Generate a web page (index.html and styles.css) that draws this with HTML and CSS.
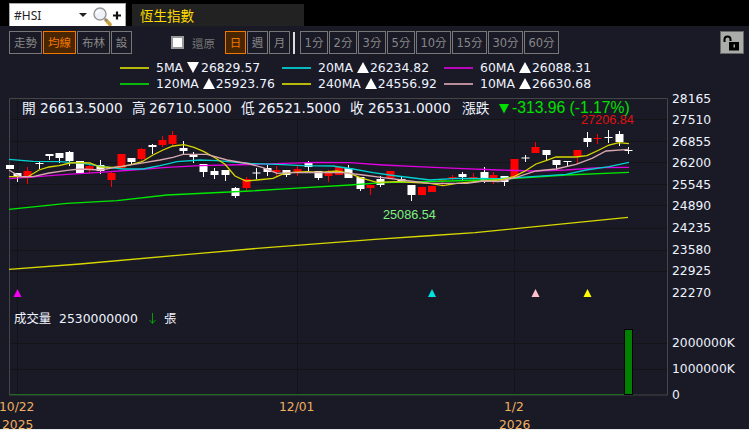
FILE: index.html
```html
<!DOCTYPE html>
<html lang="zh-Hant">
<head>
<meta charset="utf-8">
<title>#HSI</title>
<link rel="stylesheet" href="styles.css">
</head>
<body>
<div class="page">
  <header class="top">
    <div class="search">
      <span class="symbol">#HSI</span>
      <svg class="search-icons" width="45" height="21" viewBox="0 0 45 21">
        <path d="M2 8h8l-4 4z" fill="#222"/>
        <path d="M29 15l4 4.500" stroke="#c8a040" stroke-width="3.500" stroke-linecap="round"/>
        <path d="M28 14l2 2" stroke="#888" stroke-width="2"/>
        <circle cx="23" cy="9" r="6" fill="#eef2f8" stroke="#999" stroke-width="1.500"/>
        <path d="M19.500 9a3.500 3.500 0 0 1 3.500-3.500" fill="none" stroke="#fff" stroke-width="1.500"/>
        <path d="M36 10.500h8M40 6.500v8" stroke="#111" stroke-width="2.200"/>
      </svg>
    </div>
    <div class="title">恆生指數</div>
  </header>

  <nav class="toolbar">
    <div class="group g-main">
      <button class="btn w33">走勢</button><button class="btn w33 on">均線</button><button class="btn w33">布林</button><button class="btn w21">設</button>
    </div>
    <label class="restore"><span class="check"></span><span>還原</span></label>
    <div class="group g-period">
      <button class="btn w21 on">日</button><button class="btn w21">週</button><button class="btn w21">月</button>
    </div>
    <span class="sep"></span>
    <div class="group g-mins">
      <button class="btn w28">1分</button><button class="btn w28">2分</button><button class="btn w28">3分</button><button class="btn w28">5分</button><button class="btn w35">10分</button><button class="btn w35">15分</button><button class="btn w35">30分</button><button class="btn w35">60分</button>
    </div>
    <button class="lock" aria-label="鎖定">
      <svg width="20" height="16" viewBox="0 0 20 16">
        <path d="M2.500 7V4.500a3 3 0 0 1 6 0V6" fill="none" stroke="#000" stroke-width="2"/>
        <rect x="7" y="7" width="10" height="8.500" fill="#000"/>
        <rect x="11.500" y="9.500" width="1.500" height="3" fill="#aaa"/>
      </svg>
    </button>
  </nav>

  <section class="legend">
    <div class="ma"><svg class="swatch" width="29" height="2" viewBox="0 0 29 2"><path class="sw-5" d="M0 1H29"/></svg><span class="name">5MA</span><i class="tri down"></i><span>26829.57</span></div>
    <div class="ma"><svg class="swatch" width="29" height="2" viewBox="0 0 29 2"><path class="sw-20" d="M0 1H29"/></svg><span class="name">20MA</span><i class="tri"></i><span>26234.82</span></div>
    <div class="ma"><svg class="swatch" width="29" height="2" viewBox="0 0 29 2"><path class="sw-60" d="M0 1H29"/></svg><span class="name">60MA</span><i class="tri"></i><span>26088.31</span></div>
    <div class="ma"><svg class="swatch" width="29" height="2" viewBox="0 0 29 2"><path class="sw-120" d="M0 1H29"/></svg><span class="name">120MA</span><i class="tri"></i><span>25923.76</span></div>
    <div class="ma"><svg class="swatch" width="29" height="2" viewBox="0 0 29 2"><path class="sw-240" d="M0 1H29"/></svg><span class="name">240MA</span><i class="tri"></i><span>24556.92</span></div>
    <div class="ma"><svg class="swatch" width="29" height="2" viewBox="0 0 29 2"><path class="sw-10" d="M0 1H29"/></svg><span class="name">10MA</span><i class="tri"></i><span>26630.68</span></div>
  </section>

  <svg class="chart" width="749" height="334" viewBox="0 95 749 334">
    <path class="grid" d="M9 119.500H667M9 141.500H667M9 162.500H667M9 184.500H667M9 205.500H667M9 228.500H667M9 250.500H667M9 271.500H667M9 343.500H667M9 369.500H667M17.500 99V395M297.500 99V395M514.500 99V395"/>
    <path class="frame" d="M9.500 395V98.500H667.500V395H9"/>
    <path class="volbase" d="M10 394.500H624"/>

    <path class="wick-w" d="M17.500 173V182M39.500 161V169M49.500 154V160M59.500 153V163M69.500 151V166M100.500 160V174M131.500 158V165M152.500 144V154M183.500 141V154M193.500 152V163M203.500 164V177M214.500 168V179M225.500 170V181M235.500 187V198M256.500 168V179M267.500 165V176M286.500 170V177M308.500 161V171M318.500 171V180M348.500 165V178M360.500 177V191M380.500 176V187M401.500 176V183M411.500 185V201M462.500 172V180M484.500 167V183M504.500 176V186M525.500 155V162M546.500 150V160M556.500 160V171M567.500 161V166M587.500 132V147M608.500 130V143M619.500 131V146M628.500 147V154"/>
    <path class="body-w" d="M10 165V169M17.500 173V177M39.500 163V164M49.500 154V156M59.500 153V158M69.500 152V161M80 161V173M100.500 165V171M131.500 158V162M152.500 145V147M183.500 148V151M193.500 154V157M203.500 164V172M214.500 171V175M225.500 170V175M235.500 188V196M256.500 172.500V173.500M267.500 168V172M286.500 170V175M308.500 163V167M318.500 171V178M348.500 168V178M360.500 177V189M380.500 179V185M401.500 179V182M411.500 185V195M462.500 174V177M484.500 172V181M504.500 176V182M525.500 157.500V158.500M546.500 150V155M556.500 160V165M567.500 161V162M587.500 138V142M608.500 137V138M619.500 134V142M628.500 150V151"/>
    <path class="wick-r" d="M27.500 167V184M89.500 164V173M111.500 171V187M141.500 148V161M162.500 136V147M172.500 131V146M246.500 177V192M276.500 166V177M297.500 166V176M328.500 170V182M370.500 185V195M442.500 179V186M452.500 175V181M473.500 173V181M493.500 172V184M535.500 142V153M577.500 150V163M597.500 134V144"/>
    <path class="body-r" d="M27.500 171V178M89.500 166V170M111.500 173V180M121.500 154V168M141.500 149V159M162.500 140V145M172.500 135V144M246.500 179V188M276.500 170V172M297.500 169V173M328.500 172V176M339 167V175M370.500 185V188M390.500 171V178M422 187V195M432 186V192M442.500 180V181M452.500 177V178M473.500 177V178M493.500 175V182M514.500 159V177M535.500 147V153M577.500 150V156M597.500 138V139"/>

    <polyline class="line l-60" points="9,178.700 37,176.700 67,174.300 100,172.300 133,170 167,167.300 200,165.700 250,164.500 283,163.300 317,162.300 350,162.700 383,165 417,166.700 457,168.300 499,170 532,171 566,170 599,167.700 629,167.300"/>
    <polyline class="line l-120" points="9,209.300 67,203.300 117,200.700 167,195 250,191 293,188.300 350,185 383,182.700 450,181 499,179.500 566,175 629,172.300"/>
    <polyline class="line l-240" points="9,269.300 80,264 200,253.300 270,247.300 375,239.300 425,236 475,232.700 628,217.300"/>
    <polyline class="line l-20" points="9,159.300 33,161.300 60,161.700 83,163.300 103,166.700 123,169 143,169 160,165.700 177,161.700 200,160 217,160.700 250,163.500 277,164.300 303,165.700 333,166 353,169 373,172.700 397,176 430,180 457,178.300 499,178.600 532,176.700 566,174.300 586,170 609,166.700 629,162.300"/>
    <polyline class="line l-5" points="9,176.700 28,176.700 39,170 49,167 59,165.700 70,163 80,162.700 90,163 100,167 111,167.300 122,166.700 132,164.300 142,161.700 153,155 163,150 173,146 184,144.700 194,147.300 204,151.700 215,157.700 225,164.300 235,176 246,181 257,180 273,178.300 283,174 293,172.300 307,171.700 320,172.300 337,171 350,173.300 360,177.700 377,182.300 397,181.700 430,183.300 443,185.700 457,183.300 483,181 499,180 514,176.700 524,171.700 536,164 546,160.700 556,157 576,157 587,155.700 599,150 609,145 619,142.700 629,143.700"/>
    <polyline class="line l-10" points="9,170 20,176.700 33,176.700 49,173 67,170.300 80,169 100,170 120,166.700 140,163.300 160,160 173,157.300 183,154.300 207,154.300 227,160 250,164 263,167.700 277,173.300 293,172.700 317,172.300 343,172.700 363,175 383,177.700 410,181 430,183.300 467,183.300 483,181 499,181.500 516,177.300 536,171 556,169 576,164.300 592,158.300 606,151 629,149.300"/>

    <g class="markers">
      <path class="m-magenta" d="M17.500 289l4 8h-8z"/>
      <path class="m-cyan" d="M432 289l4 8h-8z"/>
      <path class="m-pink" d="M535.500 289l4 8h-8z"/>
      <path class="m-yellow" d="M587.500 289l4 8h-8z"/>
    </g>

    <text class="val v-red" x="581" y="124">27206.84</text>
    <text class="val v-green" x="383" y="219">25086.54</text>

    <g class="info">
      <text x="22" y="113">開</text><text x="40" y="113">26613.5000</text>
      <text x="132" y="113">高</text><text x="149" y="113">26710.5000</text>
      <text x="241" y="113">低</text><text x="258" y="113">26521.5000</text>
      <text x="350" y="113">收</text><text x="368" y="113">26531.0000</text>
      <text x="462" y="113">漲跌</text>
    </g>
    <path class="chg-tri" d="M499 104h10l-5 9.500z"/>
    <text class="chg" x="512" y="113">-313.96 (-1.17%)</text>

    <g class="axis">
      <text x="672" y="103">28165</text>
      <text x="672" y="124">27510</text>
      <text x="672" y="146">26855</text>
      <text x="672" y="167">26200</text>
      <text x="672" y="189">25545</text>
      <text x="672" y="210">24890</text>
      <text x="672" y="232">24235</text>
      <text x="672" y="254">23580</text>
      <text x="672" y="275">22925</text>
      <text x="672" y="297">22270</text>
      <text x="672" y="347">2000000K</text>
      <text x="672" y="373">1000000K</text>
      <text x="672" y="399">0</text>
    </g>

    <g class="info vol">
      <text x="14" y="323">成交量</text>
      <text x="59" y="323">2530000000</text>
      <text x="164" y="323">張</text>
    </g>
    <path class="vol-arrow" d="M152.500 313V323M149.500 320l3 3.500 3-3.500"/>
    <rect class="volbar" x="624.500" y="329.500" width="8" height="65"/>

    <g class="dates">
      <text x="-1" y="411">10/22</text><text x="2" y="428.500">2025</text>
      <text x="279" y="411">12/01</text>
      <text x="504" y="411">1/2</text><text x="499" y="428.500">2026</text>
    </g>
  </svg>
</div>
</body>
</html>
```
FILE: styles.css
```css
* { box-sizing: border-box; }
html, body { margin: 0; padding: 0; background: #e8eef0; }
body { width: 749px; height: 430px; overflow: hidden; font-family: "DejaVu Sans", "Noto Sans CJK TC", sans-serif; }
.page { width: 749px; height: 429px; background: #1a1a26; display: flex; flex-direction: column; overflow: hidden; }

.top { height: 26px; background: #000; display: flex; align-items: flex-end; padding-left: 9px; gap: 6px; flex: none; }
.search { width: 117px; height: 23px; background: #fff; border: 1px solid #a8a8a8; border-bottom: 0; display: flex; align-items: center; justify-content: space-between; padding: 0 3px 0 4px; }
.symbol { font: 12px "Noto Sans", sans-serif; color: #222; }
.search-icons { display: block; }
.title { width: 172px; height: 22px; background: #222; color: #ffdc00; font: 13.500px/22px "Noto Sans CJK TC", sans-serif; padding-left: 8px; }

.toolbar { height: 28px; flex: none; display: flex; align-items: flex-start; padding: 5px 5px 0 9px; }
.group { display: flex; gap: 1px; }
.btn { height: 23px; padding: 0; background: transparent; border: 1px solid #777; color: #888; font: 11.500px/20px "DejaVu Sans", "Noto Sans CJK TC", sans-serif; white-space: nowrap; }
.btn.on { border-color: #f07800; color: #f07800; background: #4a2600; }
.w21 { width: 21px; }
.w28 { width: 28px; }
.w33 { width: 33px; }
.w35 { width: 35px; }
.restore { display: flex; align-items: center; gap: 8px; margin-left: 39px; height: 23px; color: #777; font: 11.500px "Noto Sans CJK TC", sans-serif; }
.check { width: 13px; height: 13px; background: #fff; border: 2px solid #999; }
.g-period { margin-left: 10px; }
.sep { width: 2px; height: 22px; margin: 1px 5px 0 3px; background: #ddd; }
.lock { width: 24px; height: 23px; margin-left: auto; padding: 0; background: #a9aca9; border: 1px solid #666; display: flex; align-items: center; justify-content: center; }
.lock svg { display: block; }

.legend { height: 41px; flex: none; padding: 5px 0 0 120px; display: grid; grid-template-columns: repeat(3, 162px); grid-auto-rows: 16px; color: #eef4ff; font-size: 12.400px; }
.ma { display: flex; align-items: center; white-space: nowrap; }
.swatch { display: block; margin: 1px 7px 0 0; flex: none; }
.swatch path { fill: none; stroke-width: 1.400; }
.sw-5 { stroke: #ffff00; }
.sw-20 { stroke: #00ffff; }
.sw-60 { stroke: #ff00ff; }
.sw-120 { stroke: #00ff00; }
.sw-240 { stroke: #ffff00; }
.sw-10 { stroke: #ffc0cb; }
.name { margin-right: 4px; }
.tri { width: 0; height: 0; margin-right: 1px; border-left: 6.500px solid transparent; border-right: 6.500px solid transparent; border-bottom: 11px solid #fff; }
.tri.down { border-bottom: 0; border-top: 11px solid #fff; margin-right: 2px; }

.chart { display: block; flex: none; overflow: visible; }
.grid { stroke: #141418; stroke-width: 1; fill: none; }
.frame { stroke: #454545; stroke-width: 1; fill: none; }
.volbase { stroke: #1c6a1c; stroke-width: 1; }
.wick-w { stroke: #fff; stroke-width: 1; fill: none; }
.body-w { stroke: #fff; stroke-width: 8; fill: none; }
.wick-r { stroke: #f00; stroke-width: 1; fill: none; }
.body-r { stroke: #f00; stroke-width: 8; fill: none; }
.line { fill: none; stroke-width: 1.300; }
.l-5 { stroke: #d8d800; }
.l-10 { stroke: #d8a8b0; }
.l-20 { stroke: #00d0d0; }
.l-60 { stroke: #e000e0; }
.l-120 { stroke: #00e800; }
.l-240 { stroke: #d8d800; }
.m-magenta { fill: #f000f0; }
.m-cyan { fill: #00e0e0; }
.m-pink { fill: #ffc0cb; }
.m-yellow { fill: #ffff00; }
.val { font: 12.700px "Liberation Sans", sans-serif; }
.v-red { fill: #e01010; }
.v-green { fill: #80f080; }
.info text { font: 13.700px "DejaVu Sans", "Noto Sans CJK TC", sans-serif; fill: #eef4ff; }
.info.vol text { font-size: 12.400px; }
.chg-tri { fill: #00e000; }
.chg { font: 15.700px "Liberation Sans", sans-serif; fill: #00e000; }
.axis text { font: 12.300px "DejaVu Sans", sans-serif; fill: #eef4ff; }
.vol-arrow { fill: none; stroke: #00a000; stroke-width: 1; }
.volbar { fill: #008000; stroke: #000; stroke-width: 1; }
.dates text { font: 12.300px "DejaVu Sans", sans-serif; fill: #f0b060; }
```
